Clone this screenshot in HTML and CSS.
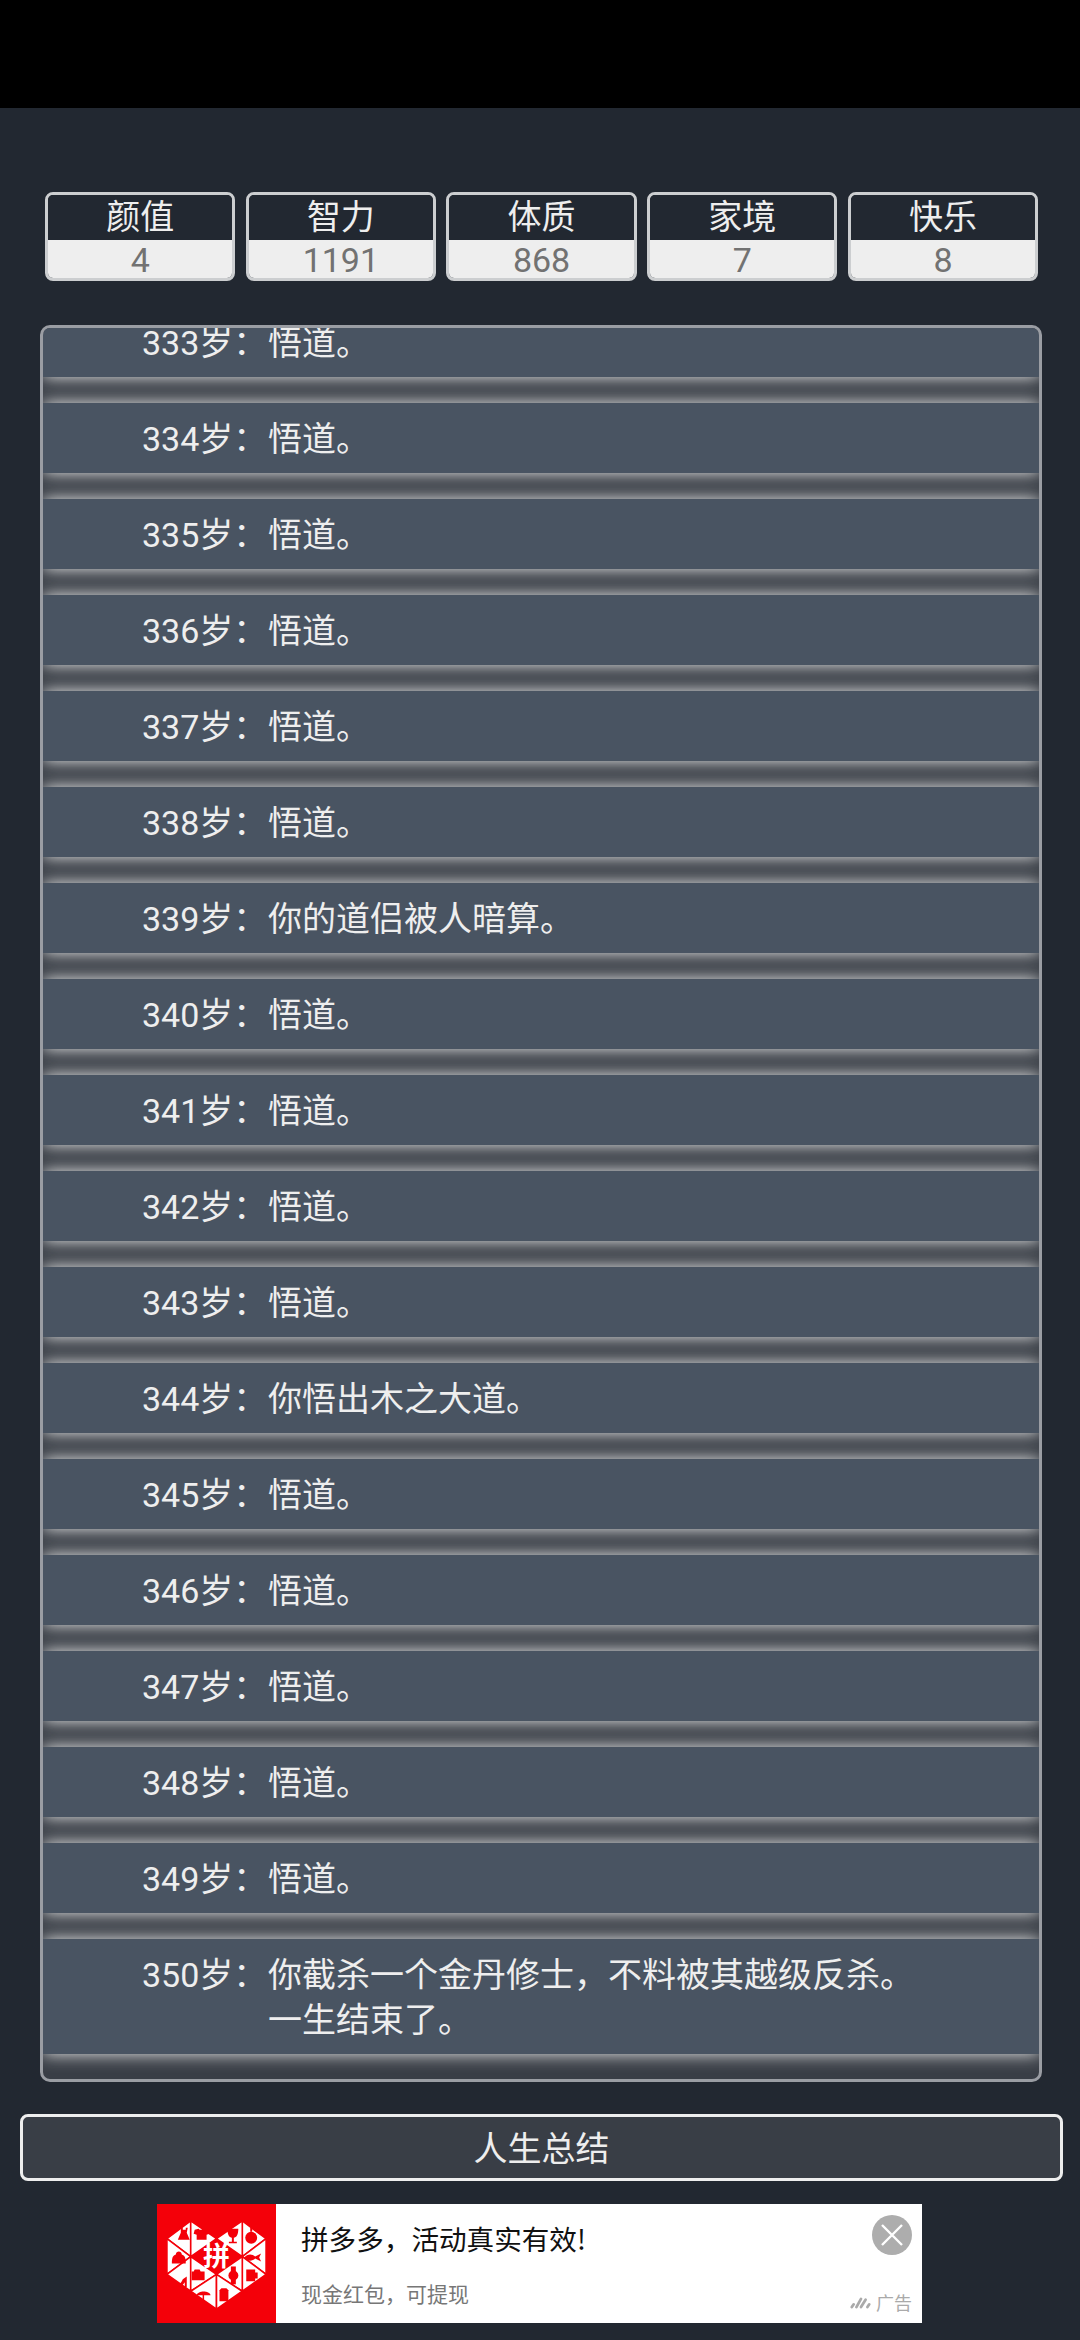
FILE: index.html
```html
<!DOCTYPE html>
<html lang="zh-CN">
<head>
<meta charset="utf-8">
<title>人生重开模拟器</title>
<link rel="stylesheet" href="styles.css">
</head>
<body>
<div class="status-bar"></div>
<main class="page">
  <section class="stats">
    <div class="stat"><div class="stat-label">颜值</div><div class="stat-value">4</div></div>
    <div class="stat"><div class="stat-label">智力</div><div class="stat-value">1191</div></div>
    <div class="stat"><div class="stat-label">体质</div><div class="stat-value">868</div></div>
    <div class="stat"><div class="stat-label">家境</div><div class="stat-value">7</div></div>
    <div class="stat"><div class="stat-label">快乐</div><div class="stat-value">8</div></div>
  </section>
  <section class="panel">
    <ul class="log">
      <li><span class="age">333岁：</span><span class="event">悟道。</span></li>
      <li><span class="age">334岁：</span><span class="event">悟道。</span></li>
      <li><span class="age">335岁：</span><span class="event">悟道。</span></li>
      <li><span class="age">336岁：</span><span class="event">悟道。</span></li>
      <li><span class="age">337岁：</span><span class="event">悟道。</span></li>
      <li><span class="age">338岁：</span><span class="event">悟道。</span></li>
      <li><span class="age">339岁：</span><span class="event">你的道侣被人暗算。</span></li>
      <li><span class="age">340岁：</span><span class="event">悟道。</span></li>
      <li><span class="age">341岁：</span><span class="event">悟道。</span></li>
      <li><span class="age">342岁：</span><span class="event">悟道。</span></li>
      <li><span class="age">343岁：</span><span class="event">悟道。</span></li>
      <li><span class="age">344岁：</span><span class="event">你悟出木之大道。</span></li>
      <li><span class="age">345岁：</span><span class="event">悟道。</span></li>
      <li><span class="age">346岁：</span><span class="event">悟道。</span></li>
      <li><span class="age">347岁：</span><span class="event">悟道。</span></li>
      <li><span class="age">348岁：</span><span class="event">悟道。</span></li>
      <li><span class="age">349岁：</span><span class="event">悟道。</span></li>
      <li><span class="age">350岁：</span><span class="event">你截杀一个金丹修士，不料被其越级反杀。<br>一生结束了。</span></li>
    </ul>
  </section>
  <button class="summary" type="button">人生总结</button>
  <aside class="ad">
    <svg class="ad-logo" viewBox="0 0 120 120" aria-hidden="true">
      <rect width="120" height="120" fill="#f40009"/>
      <g fill="#fff" stroke="#f40009" stroke-width="1.6" stroke-linejoin="round">
        <path d="M34 17 10 35 34 53Z"/><path d="M34 17 60 35 34 53Z"/>
        <path d="M10 35V71L34 53Z"/><path d="M10 71 34 53V88Z"/>
        <path d="M34 53 60 71 34 88Z"/><path d="M34 88 60 71V106Z"/>
        <path d="M86 17 110 35 86 53Z"/><path d="M86 17 60 35 86 53Z"/>
        <path d="M110 35V71L86 53Z"/><path d="M110 71 86 53V88Z"/>
        <path d="M86 53 60 71 86 88Z"/><path d="M86 88 60 71V106Z"/>
      </g>
      <g fill="#f40009" stroke="none">
        <path d="M24 24h2v2h3v-2h2l-1 5 3 7h-12l3-7z"/>
        <path d="M38 26l4-1 1 1h2l1-1 5 1 2 4-3 1v5h-10v-5l-3-1z"/>
        <path d="M15 60c0-6 1-8 4-9 0-4 6-4 6 0 3 1 4 3 4 9z"/>
        <path d="M16 84c4-1 8-3 10-8l4-3v11h-2v-5l-3 4z"/>
        <path d="M38 66h5l1 2h4v9H35v-9h2z"/>
        <path d="M40 92c1-5 13-5 14 0z"/><path d="M46 91h1.5v6c0 3-4 3-4 0h1.3c0 1.300 1.200 1.300 1.200 0z"/>
        <path d="M65 85h5l2 2v11h-9V87z"/>
        <circle cx="77" cy="72" r="5"/><rect x="74.500" y="63" width="5" height="18"/>
        <path d="M90 66h9v3h2.500v6H99v3h-9z"/>
        <path d="M88 54c3-4 8-4 11-1l6-3-2 4 2 4-6-3c-3 3-8 3-11-1z"/>
        <circle cx="95" cy="34" r="6"/><rect x="94" y="24" width="2" height="4"/>
        <path d="M71 25h11c0 6-2 9-4.500 9v4h3v1.500h-8V38h3v-4c-2.500 0-4.500-3-4.500-9z"/>
      </g>
      <text class="logo-char" x="60" y="63" text-anchor="middle">拼</text>
    </svg>
    <div class="ad-body">
      <div class="ad-title">拼多多，活动真实有效!</div>
      <div class="ad-sub">现金红包，可提现</div>
    </div>
    <div class="ad-side">
      <span class="ad-close">
        <svg viewBox="0 0 40 40" aria-hidden="true"><path d="M10 10 30 30M30 10 10 30" stroke="#fff" stroke-width="2.400" fill="none"/></svg>
      </span>
      <span class="ad-mark">
        <svg viewBox="0 0 24 14" aria-hidden="true"><g stroke="#aaa" stroke-width="3" stroke-linecap="round"><path d="M2 12 4 9"/><path d="M7 12 12 3"/><path d="M12 12 17 4"/><path d="M19 12 21 9"/></g></svg>
        广告
      </span>
    </div>
  </aside>
</main>
</body>
</html>
```
FILE: styles.css
```css
* { box-sizing: border-box; }
html, body { margin: 0; padding: 0; }
body {
  width: 1080px;
  height: 2340px;
  overflow: hidden;
  background: #222831;
  color: #eeeeee;
  font-family: Roboto, "Noto Sans CJK SC", sans-serif;
  font-size: 34px;
}
.status-bar { height: 108px; background: #000; }
.page { display: flex; flex-direction: column; }

.stats {
  display: grid;
  grid-template-columns: repeat(5, 190.4px);
  column-gap: 10.3px;
  margin: 84px 0 0 45px;
}
.stat {
  height: 89px;
  border: 3px solid #ccced0;
  border-radius: 8px;
  overflow: hidden;
  display: flex;
  flex-direction: column;
  text-align: center;
}
.stat-label { height: 45px; line-height: 45px; background: #222831; color: #eeeeee; }
.stat-value { flex: 1; line-height: 40px; background: #eeeeee; color: #727272; }

.panel {
  margin: 44px 38px 0 40px;
  height: 1757px;
  border: 3px solid #9a9da3;
  border-radius: 10px;
  background: #393e46;
  overflow: hidden;
}
.log { list-style: none; margin: -21px 0 0; padding: 0; }
.log li {
  display: flex;
  padding: 14px 0 11px 99px;
  line-height: 45px;
  margin-bottom: 26px;
  background: #495462;
  box-shadow: 0 0 16px #eeeeee;
}
.age { width: 126px; flex: none; }

.summary {
  margin: 32px 17px 0 20px;
  height: 67px;
  border: 3px solid #eeeeee;
  border-radius: 8px;
  background: #393e46;
  color: #eeeeee;
  font: inherit;
  padding: 0 0 3px;
}

.ad {
  display: flex;
  margin: 23px 158px 0 157px;
  height: 119px;
  background: #fff;
}
.ad-logo { width: 119px; height: 119px; flex: none; display: block; }
.logo-char { font-family: "Noto Sans CJK SC", sans-serif; font-weight: 700; font-size: 27px; fill: #fff; }
.ad-body { flex: 1; padding-left: 25px; }
.ad-title { color: #111; font-size: 27.6px; line-height: 40px; margin-top: 14px; font-family: "Noto Sans CJK SC", sans-serif; }
.ad-sub { color: #777; font-size: 21px; line-height: 30px; margin-top: 20px; font-family: "Noto Sans CJK SC", sans-serif; }
.ad-side { width: 60px; flex: none; display: flex; flex-direction: column; align-items: flex-end; padding-right: 10px; }
.ad-close { display: block; width: 40px; height: 40px; border-radius: 50%; background: #adadad; margin-top: 11px; flex: none; }
.ad-close svg { display: block; width: 40px; height: 40px; }
.ad-mark { display: flex; align-items: center; gap: 4px; color: #aaa; font-size: 18px; line-height: 24px; margin-top: 35px; white-space: nowrap; font-family: "Noto Sans CJK SC", sans-serif; flex: none; }
.ad-mark svg { width: 22px; height: 13px; flex: none; }
```
